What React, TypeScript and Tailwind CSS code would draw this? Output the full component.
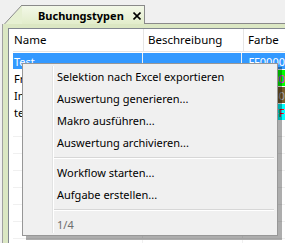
import React from 'react';

type Row = { name: string; desc: string; color: string; bg: string; fg: string };

const rows: Row[] = [
  { name: 'Test', desc: '', color: 'FF0000', bg: '', fg: '' },
  { name: 'Fremd', desc: '', color: '00FF00', bg: '#00ff00', fg: '#ff00ff' },
  { name: 'Intern', desc: '', color: '806050', bg: '#7a5c2a', fg: '#a0a8b8' },
  { name: 'test', desc: '', color: '00FFFF', bg: '#00ffff', fg: '#ff0000' },
];

const menuItems = [
  'Selektion nach Excel exportieren',
  'Auswertung generieren...',
  'Makro ausführen...',
  'Auswertung archivieren...',
];

const menuItems2 = ['Workflow starten...', 'Aufgabe erstellen...'];

const Separator = () => (
  <div className="h-2 flex items-center pl-[29px] pr-[3px]">
    <div className="h-[2px] w-full border-t border-[#d7d7d7] border-b-white border-b" />
  </div>
);

const ContextMenu = () => (
  <div className="absolute left-[22px] top-[63px] w-[256px] h-[173px] bg-[#f0f0f0] border border-[#979797] shadow-[4px_4px_0_rgba(0,0,0,0.32)] py-[2px]">
    <div className="absolute left-[29px] top-[2px] bottom-[2px] w-[2px] border-l border-[#e2e3e3] border-r border-r-white" />
    {menuItems.map(item => (
      <div key={item} className="h-[22px] flex items-center pl-[34px] pb-[2px] text-black">
        {item}
      </div>
    ))}
    <Separator />
    {menuItems2.map(item => (
      <div key={item} className="h-[22px] flex items-center pl-[34px] pb-[2px] text-black">
        {item}
      </div>
    ))}
    <Separator />
    <div className="h-[20px] flex items-center pl-[34px] text-[#6d6d6d]">1/4</div>
  </div>
);

export default function App() {
  return (
    <div
      className="relative w-[285px] h-[243px] overflow-hidden bg-[#f0f0f0] text-[11px] leading-none"
      style={{ fontFamily: '"Noto Sans", "Open Sans", sans-serif' }}
    >
      {/* tab strip */}
      <div className="flex h-[24px] items-end">
        <svg width="22" height="24" viewBox="0 0 22 24" className="shrink-0">
          <polygon points="5,24 22,5 22,24" fill="#e6f0d2" />
          <line x1="4.5" y1="24" x2="22" y2="5" stroke="#8a8a8a" strokeWidth="1" />
        </svg>
        <div className="relative h-[19px] w-[123px] shrink-0 border-t border-r border-[#8a8a8a] bg-gradient-to-b from-[#f3f8e8] to-[#e2edcb] flex items-center">
          <span className="ml-[16px] font-bold text-[11px] text-black whitespace-nowrap">Buchungstypen</span>
          <svg width="8" height="8" viewBox="0 0 8 8" className="absolute left-[111px] top-[6px]">
            <path d="M0.5 0.5 L7.5 7.5 M7.5 0.5 L0.5 7.5" stroke="#000" strokeWidth="1.6" />
          </svg>
        </div>
        <div className="flex-1 h-[1px] bg-[#8a8a8a] self-end" />
      </div>

      {/* panel */}
      <div className="ml-[2px] h-[219px] border-l border-[#a0a0a0] bg-[#dbe7c3] pl-[5px] pt-[4px]">
        <div className="h-full bg-white border-l border-t border-[#828790] pl-[4px]">
          {/* header */}
          <div className="flex h-[23px] items-center border-b border-[#e5e5e5] text-[11.5px]">
            <div className="w-[130px] pl-[1px]">Name</div>
            <div className="w-[100px] h-full flex items-center border-l border-[#e5e5e5] pl-[4px]">Beschreibung</div>
            <div className="flex-1 h-full flex items-center border-l border-[#e5e5e5] pl-[4px]">Farbe</div>
          </div>
          {rows.map((r, i) => (
            <div key={r.name} className={`flex h-[16px] mt-[1px] ${i === 0 ? 'bg-[#3399ff] text-white' : 'text-black'}`}>
              <div className="w-[130px] pl-[1px] flex items-center border-r border-[#f0f0f0]">{r.name}</div>
              <div className="w-[100px] flex items-center border-r border-[#f0f0f0]">{r.desc}</div>
              <div
                className="flex-1 flex items-center pl-[6px]"
                style={r.bg ? { backgroundColor: r.bg, color: r.fg } : undefined}
              >
                {r.color}
              </div>
            </div>
          ))}
          {Array.from({ length: 8 }).map((_, i) => (
            <div key={i} className="flex h-[16px] mt-[1px] border-b border-[#f0f0f0]">
              <div className="w-[130px] border-r border-[#f0f0f0]" />
              <div className="w-[100px] border-r border-[#f0f0f0]" />
              <div className="flex-1" />
            </div>
          ))}
        </div>
      </div>

      <ContextMenu />
    </div>
  );
}
